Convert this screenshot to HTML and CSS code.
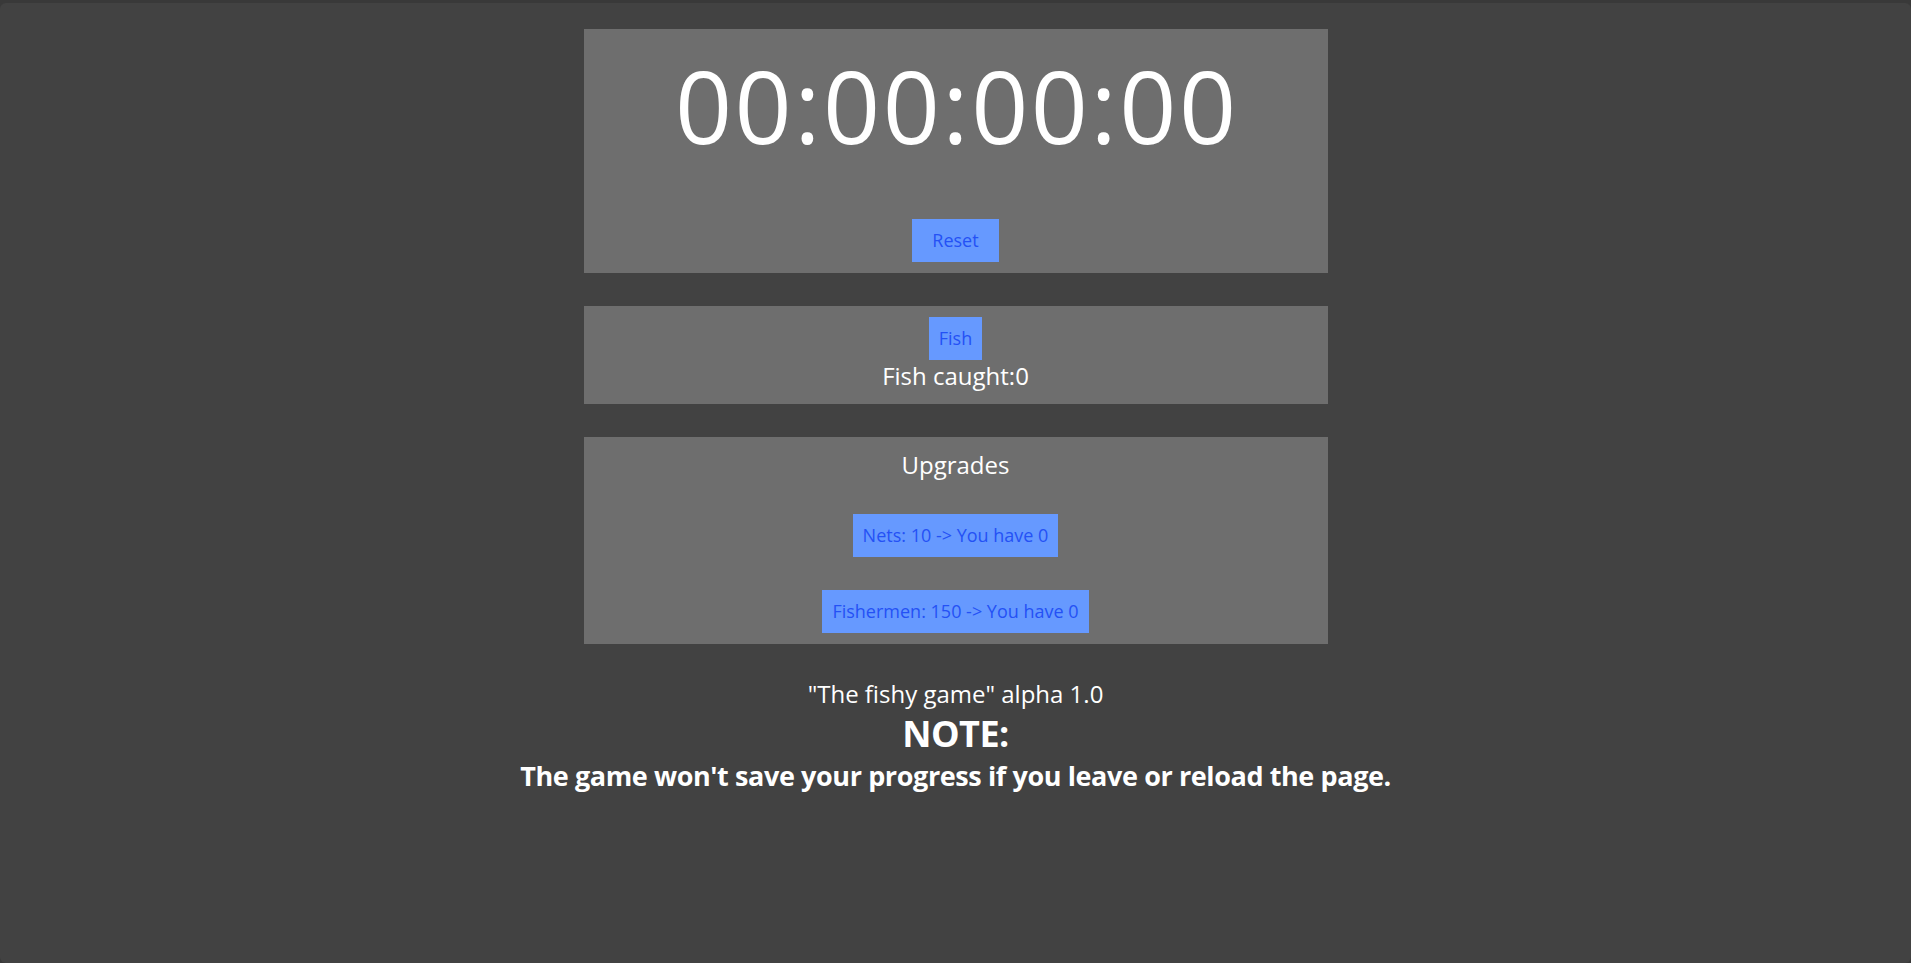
FILE: index.html
```html
<!DOCTYPE html>
<html lang="en">
<head>
<meta charset="utf-8">
<title>The fishy game</title>
<link rel="stylesheet" href="styles.css">
</head>
<body>
<div class="window">
  <main class="game">
    <section class="panel timer-panel">
      <div class="timer">00:00:00:00</div>
      <button class="btn btn-reset">Reset</button>
    </section>
    <section class="panel fish-panel">
      <button class="btn">Fish</button>
      <div class="label">Fish caught:0</div>
    </section>
    <section class="panel upgrades-panel">
      <div class="label label-upgrades">Upgrades</div>
      <button class="btn">Nets: 10 -&gt; You have 0</button>
      <button class="btn">Fishermen: 150 -&gt; You have 0</button>
    </section>
    <footer class="footer">
      <div class="version">"The fishy game" alpha 1.0</div>
      <div class="note-title">NOTE:</div>
      <div class="note-text">The game won't save your progress if you leave or reload the page.</div>
    </footer>
  </main>
</div>
</body>
</html>
```

FILE: styles.css
```css
html {
  background: #393939;
}
body {
  margin: 0;
  padding-top: 3px;
  font-family: "Open Sans", "Noto Sans", sans-serif;
  color: #ffffff;
}
.window {
  background: #424242;
  border-radius: 6px;
  height: 960px;
  box-sizing: border-box;
  padding-top: 26px;
}
.game {
  display: flex;
  flex-direction: column;
  align-items: center;
  gap: 33px;
}
.panel {
  width: 744px;
  background: #6e6e6e;
  display: flex;
  flex-direction: column;
  align-items: center;
  box-sizing: border-box;
  padding: 11px 0;
}
.timer {
  font-size: 100px;
  line-height: 100px;
  letter-spacing: 2.5px;
  margin: 15px 0 64px;
  padding-left: 2.5px;
}
.btn {
  font-family: inherit;
  font-size: 18px;
  line-height: 23px;
  padding: 10px 10px;
  background: #6699ff;
  color: #2451f5;
  border: none;
  border-radius: 0;
  cursor: pointer;
}
.btn-reset {
  padding: 10px 20px;
}
.fish-panel {
  padding-bottom: 12px;
}
.label {
  font-size: 24px;
  line-height: 32px;
}
.upgrades-panel {
  gap: 33px;
}
.label-upgrades {
  line-height: 33px;
}
.footer {
  display: flex;
  flex-direction: column;
  align-items: center;
  margin-top: 1px;
}
.version {
  font-size: 24px;
  line-height: 32px;
}
.note-title {
  font-size: 36px;
  line-height: 48px;
  font-weight: 700;
  letter-spacing: -0.5px;
}
.note-text {
  font-size: 27px;
  line-height: 36px;
  font-weight: 700;
  letter-spacing: -0.4px;
}
```
